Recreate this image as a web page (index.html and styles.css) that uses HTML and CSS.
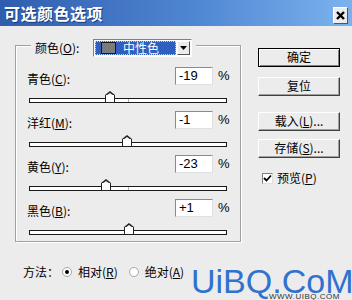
FILE: index.html
```html
<!DOCTYPE html>
<html lang="zh">

<head>
    <meta charset="UTF-8">
    <title>可选颜色选项</title>
    <link rel="stylesheet" href="styles.css">
</head>

<body>
    <div class="dialog">
        <div class="titlebar">
            <span class="title">可选颜色选项</span>
            <span class="close">
                <svg width="9" height="9" viewBox="0 0 9 9"><path d="M1 1L8 8M8 1L1 8" stroke="#000" stroke-width="2.4"/></svg>
            </span>
        </div>

        <div class="content">
            <div class="main">
                <div class="group">
                    <div class="group-head">
                        <span class="head-label">颜色(<u>O</u>):</span>
                        <div class="select">
                            <div class="select-value"><span class="swatch"></span>中性色</div>
                            <div class="select-arrow">
                                <svg width="7" height="4" viewBox="0 0 7 4"><path d="M0 0H7L3.5 4Z" fill="#000"/></svg>
                            </div>
                        </div>
                    </div>

                    <div class="row">
                        <div class="row-top">
                            <span class="row-label">青色(<u>C</u>):</span>
                            <span class="num">-19</span>
                            <span class="pct">%</span>
                        </div>
                        <div class="track"><span class="thumb" style="left: 75px;"></span></div>
                    </div>
                    <div class="row">
                        <div class="row-top">
                            <span class="row-label">洋红(<u>M</u>):</span>
                            <span class="num">-1</span>
                            <span class="pct">%</span>
                        </div>
                        <div class="track"><span class="thumb" style="left: 92px;"></span></div>
                    </div>
                    <div class="row">
                        <div class="row-top">
                            <span class="row-label">黄色(<u>Y</u>):</span>
                            <span class="num">-23</span>
                            <span class="pct">%</span>
                        </div>
                        <div class="track"><span class="thumb" style="left: 71px;"></span></div>
                    </div>
                    <div class="row">
                        <div class="row-top">
                            <span class="row-label">黑色(<u>B</u>):</span>
                            <span class="num">+1</span>
                            <span class="pct">%</span>
                        </div>
                        <div class="track"><span class="thumb" style="left: 94px;"></span></div>
                    </div>
                </div>

                <div class="buttons">
                    <div class="btn btn-default">确定</div>
                    <div class="btn btn-reset">复位</div>
                    <div class="btn btn-load">载入(<u>L</u>)...</div>
                    <div class="btn btn-save">存储(<u>S</u>)...</div>
                    <div class="check-row">
                        <span class="checkbox">
                            <svg width="9" height="9" viewBox="0 0 9 9"><path d="M1 4L3.5 6.5L8 1.5" stroke="#000" stroke-width="1.8" fill="none"/></svg>
                        </span>
                        <span>预览(<u>P</u>)</span>
                    </div>
                </div>
            </div>

            <div class="method">
                <span class="method-label">方法：</span>
                <span class="radio checked"></span>
                <span class="radio-text">相对(<u>R</u>)</span>
                <span class="radio"></span>
                <span class="radio-text">绝对(<u>A</u>)</span>
            </div>
        </div>

        <div class="watermark">UiBQ.CoM</div>
        <div class="watermark-small">WWW.UIBQ.COM</div>
    </div>
</body>

</html>
```

FILE: styles.css
```css
* {
    box-sizing: border-box;
}

body {
    margin: 0;
    background: #ececec;
    font-family: "Noto Sans CJK SC", sans-serif;
    font-size: 12px;
    line-height: 16px;
    color: #000;
}

u {
    text-decoration: underline;
    text-underline-offset: 1px;
}

.dialog {
    position: relative;
    width: 352px;
    height: 300px;
    overflow: hidden;
}

.titlebar {
    height: 26px;
    padding: 0 4px 0 4px;
    background: linear-gradient(to right, #2f5dae, #4f86d2 55%, #7bb2ee);
    display: flex;
    align-items: center;
    justify-content: space-between;
}

.title {
    color: #fff;
    font-weight: bold;
    font-size: 16px;
    line-height: 18px;
    letter-spacing: 0.5px;
    text-shadow: 1px 1px 0 #1d3d7a;
}

.close {
    width: 15px;
    height: 17px;
    margin-top: 4px;
    background: #ececec;
    border: 1px solid;
    border-color: #fff #555 #555 #fff;
    display: flex;
    align-items: center;
    justify-content: center;
}

.content {
    padding: 19px 0 0 15px;
}

.main {
    display: flex;
    gap: 17px;
    align-items: flex-start;
}

/* 分组框 */
.group {
    width: 226px;
    height: 197px;
    border: 1px solid #a0a0a0;
    box-shadow: 1px 1px 0 #fff, inset 1px 1px 0 #fff;
}

.group-head {
    display: flex;
    align-items: center;
    width: fit-content;
    margin: -7px 0 10px 15px;
    padding: 0 4px;
    background: #ececec;
}

.head-label {
    width: 58px;
}

.select {
    width: 99px;
    height: 18px;
    display: flex;
    align-items: center;
    background: #fff;
    border: 1px solid;
    border-color: #808080 #fff #fff #808080;
    padding: 1px;
}

.select-value {
    width: 81px;
    height: 14px;
    background: #2f5fc0;
    outline: 1px dotted #c8d4ec;
    outline-offset: -1px;
    color: #fff;
    display: flex;
    align-items: center;
    padding-left: 6px;
    line-height: 14px;
}

.swatch {
    width: 15px;
    height: 12px;
    background: #7b7b7b;
    border: 1px solid #1a1a1a;
    margin-right: 7px;
}

.select-arrow {
    width: 13px;
    height: 14px;
    margin-left: auto;
    background: #ececec;
    border: 1px solid;
    border-color: #fff #555 #555 #fff;
    display: flex;
    align-items: center;
    justify-content: center;
}

.row {
    height: 44px;
    padding-left: 11px;
}

.row-top {
    display: flex;
    align-items: center;
    height: 18px;
}

.row-label {
    width: 148px;
    margin-top: 6px;
}

.num {
    width: 38px;
    height: 18px;
    background: #fff;
    border: 1px solid;
    border-color: #8a8a8a #e0e0e0 #e0e0e0 #8a8a8a;
    font-family: "Liberation Sans", "Noto Sans CJK SC", sans-serif;
    font-size: 13px;
    line-height: 16px;
    padding-left: 3px;
}

.pct {
    margin-left: 5px;
    font-family: "Liberation Sans", sans-serif;
    font-size: 13px;
}

.track {
    position: relative;
    width: 198px;
    height: 5px;
    margin: 13px 0 0 2px;
    background: #fff;
    border: 1px solid #1a1a1a;
}

.track::after {
    content: "";
    position: absolute;
    left: 98px;
    top: 0;
    width: 1px;
    height: 3px;
    background: #b0b0b0;
}

.thumb {
    position: absolute;
    top: -4px;
    width: 10px;
    height: 8px;
    background: #fff;
    border: 1px solid #222;
    border-top: none;
    z-index: 1;
}

.thumb::before {
    content: "";
    position: absolute;
    left: -1px;
    top: -4px;
    border-left: 5px solid transparent;
    border-right: 5px solid transparent;
    border-bottom: 4px solid #222;
}

.thumb::after {
    content: "";
    position: absolute;
    left: 0;
    top: -2px;
    border-left: 4px solid transparent;
    border-right: 4px solid transparent;
    border-bottom: 3px solid #fff;
}

/* 右侧按钮 */
.buttons {
    width: 82px;
    margin-top: 3px;
    display: flex;
    flex-direction: column;
}

.btn {
    height: 19px;
    background: #ececec;
    border: 1px solid;
    border-color: #fff #404040 #404040 #fff;
    box-shadow: inset -1px -1px 0 #a0a0a0;
    text-align: center;
    line-height: 16px;
}

.btn-default {
    border: 1px solid #000;
    box-shadow: inset 1px 1px 0 #fff, inset -1px -1px 0 #808080;
}

.btn-reset {
    margin-top: 10px;
}

.btn-load {
    margin-top: 16px;
}

.btn-save {
    margin-top: 8px;
}

.check-row {
    display: flex;
    align-items: center;
    margin: 12px 0 0 4px;
    gap: 4px;
}

.checkbox {
    width: 11px;
    height: 11px;
    background: #fff;
    border: 1px solid;
    border-color: #808080 #e0e0e0 #e0e0e0 #808080;
    display: flex;
    align-items: center;
    justify-content: center;
}

/* 方法 */
.method {
    display: flex;
    align-items: center;
    margin-top: 22px;
    padding-left: 8px;
    height: 16px;
}

.method-label {
    width: 39px;
}

.radio {
    width: 10px;
    height: 10px;
    border-radius: 50%;
    background: #fff;
    border: 1px solid #a8a8a8;
    margin-right: 6px;
    position: relative;
}

.radio.checked::after {
    content: "";
    position: absolute;
    left: 2px;
    top: 2px;
    width: 4px;
    height: 4px;
    border-radius: 50%;
    background: #000;
}

.radio-text {
    margin-right: 11px;
}

.watermark {
    position: absolute;
    left: 191px;
    top: 269px;
    font-family: "Liberation Sans", sans-serif;
    font-size: 34px;
    line-height: 24px;
    color: #2f72d0;
}

.watermark-small {
    position: absolute;
    left: 269px;
    top: 293px;
    font-family: "Liberation Sans", sans-serif;
    font-size: 8px;
    line-height: 7px;
    letter-spacing: 0.5px;
    color: #333;
}
```
